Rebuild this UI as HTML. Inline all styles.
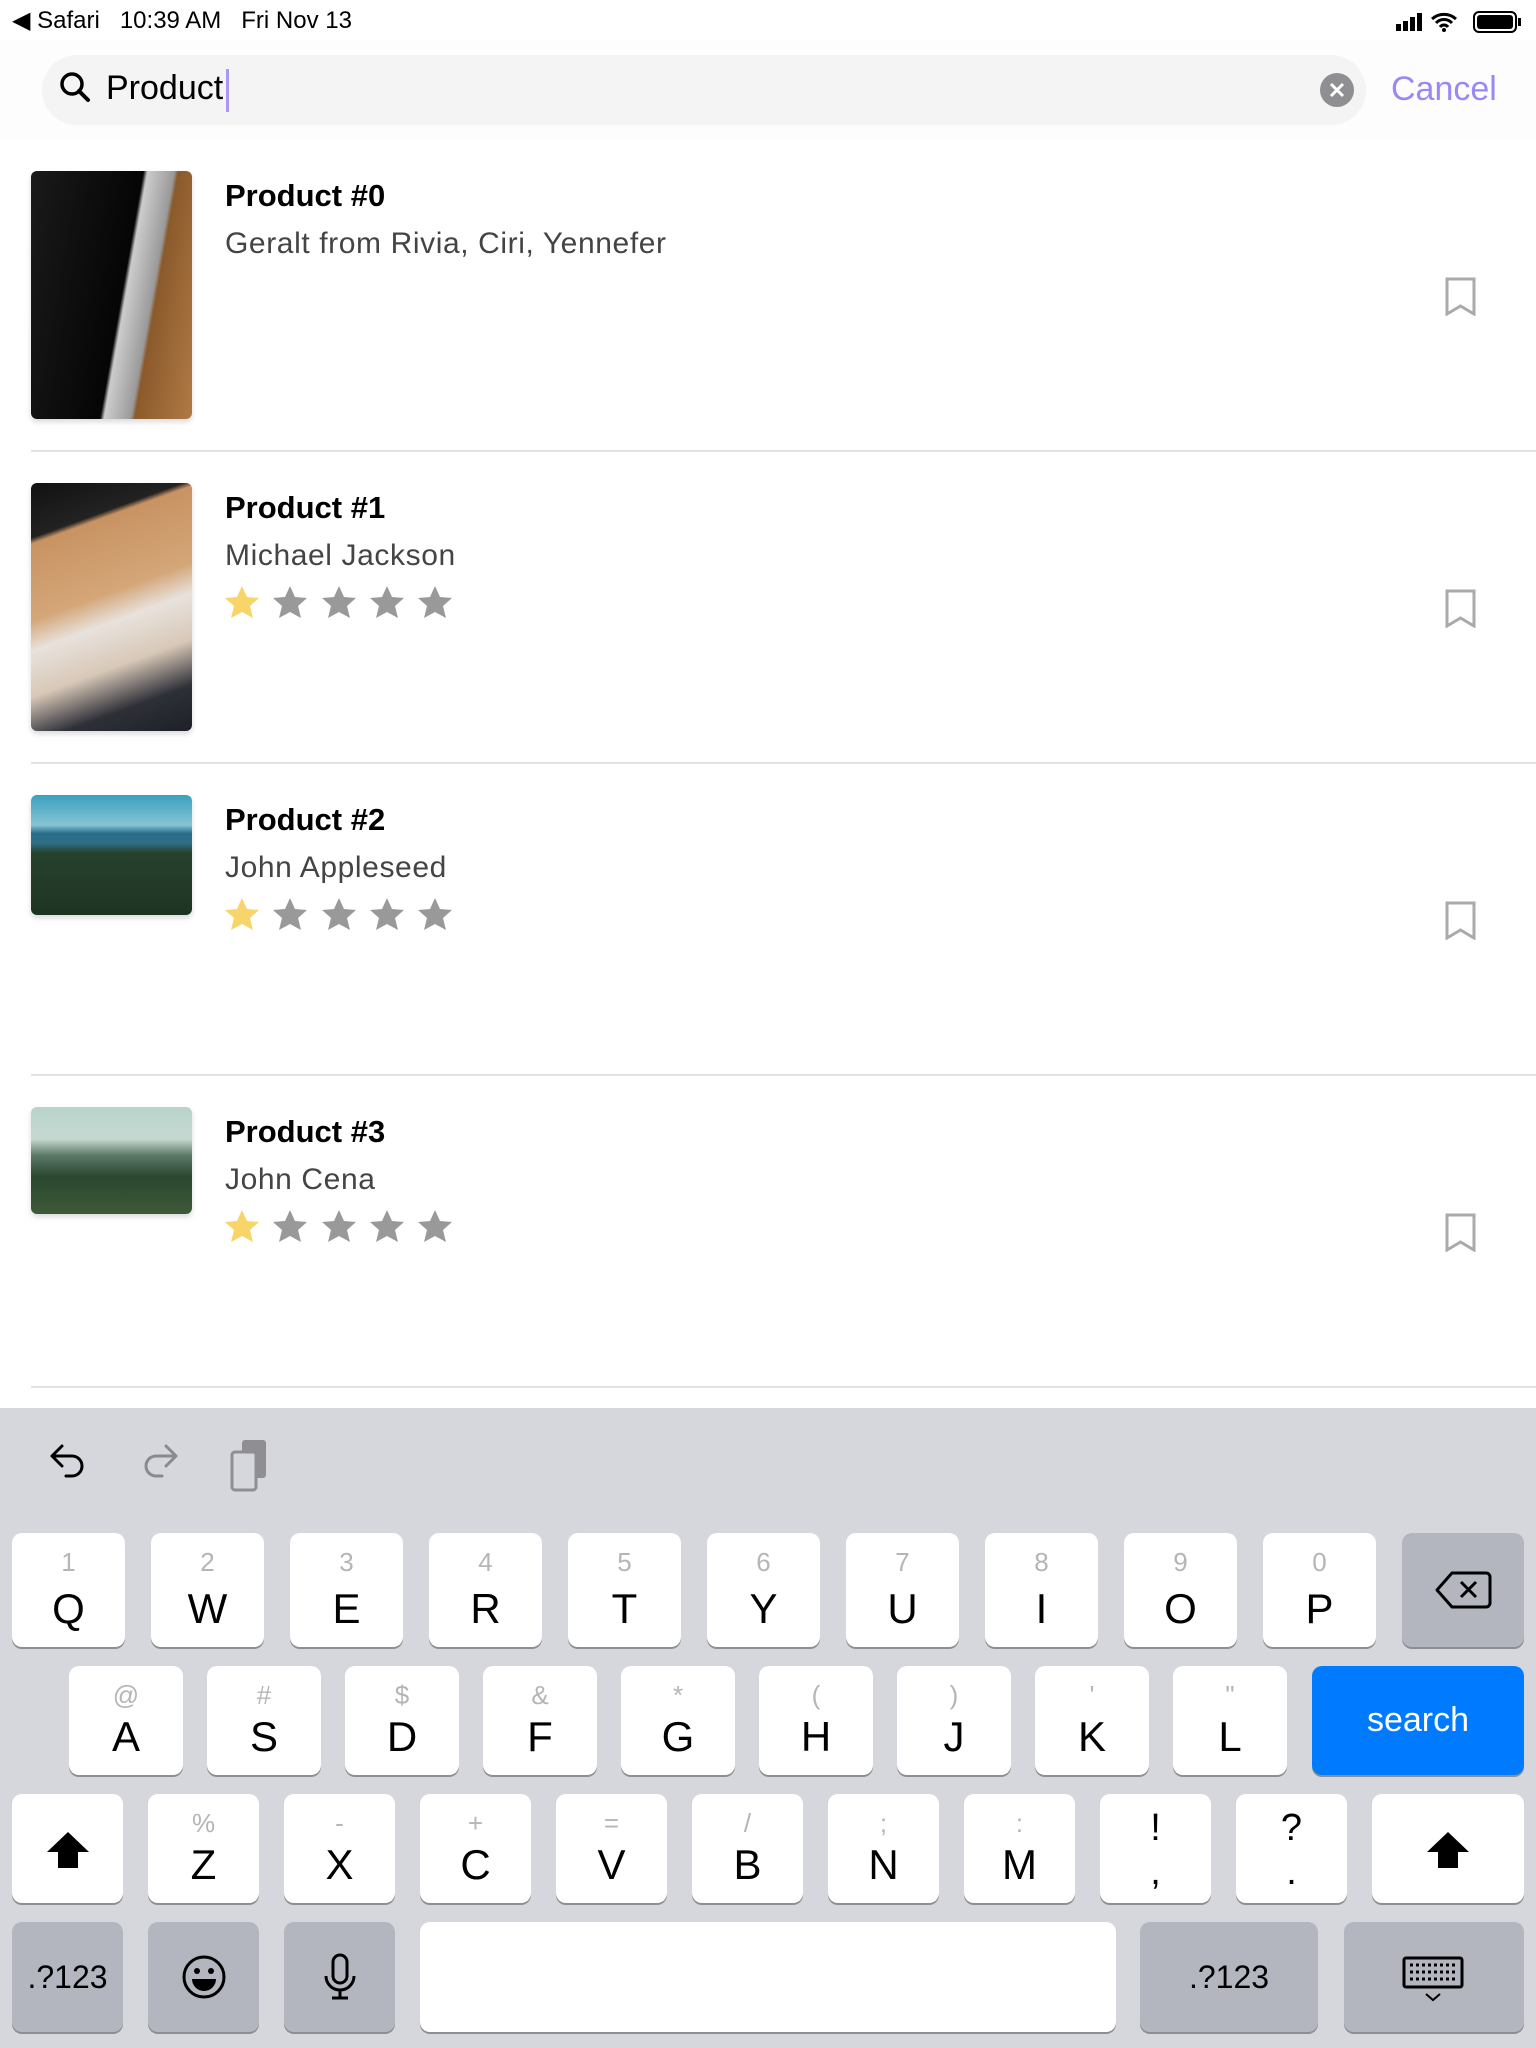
<!DOCTYPE html>
<html><head><meta charset="utf-8"><style>
*{margin:0;padding:0;box-sizing:border-box}
body{width:1536px;height:2048px;position:relative;background:#fff;font-family:"Liberation Sans",sans-serif;overflow:hidden}
.a{position:absolute}
.sb{font-size:24px;color:#000;top:6px}
.title{position:absolute;left:225px;font-size:31px;font-weight:bold;color:#000}
.sub{position:absolute;left:225px;font-size:30px;color:#444;letter-spacing:0.6px}
.div{position:absolute;left:31px;right:0;height:2px;background:#e2e2e2}
.img{position:absolute;left:31px;width:161px;border-radius:6px;box-shadow:0 3px 6px rgba(0,0,0,.15)}
.stars{position:absolute;left:224px}
.bm{position:absolute;left:1445px}
.kb{position:absolute;left:0;top:1408px;width:1536px;height:640px;background:#d5d7dc}
.k{position:absolute;background:#fff;border-radius:10px;box-shadow:0 2px 0 #8c8e93;text-align:center;color:#000}
.k .s{position:absolute;left:0;right:0;top:14px;font-size:26px;color:#b5b5b8}
.k .m{position:absolute;left:0;right:0;bottom:14px;font-size:42px}
.g{background:#b3b6bf}
.r1{top:1533px;height:114px;width:113px}
.r2{top:1666px;height:109px;width:114px}
.r3{top:1794px;height:109px;width:111px}
.r4{top:1922px;height:110px}
</style></head><body>
<div class="a sb" style="left:12px">◀ Safari&nbsp;&nbsp;&nbsp;10:39 AM&nbsp;&nbsp;&nbsp;Fri Nov 13</div>
<div class="a" style="left:1396px;top:10px">
<svg width="128" height="24"><rect x="0" y="14" width="5" height="7" fill="#000"/><rect x="7" y="11" width="5" height="10" fill="#000"/><rect x="14" y="7" width="5" height="14" fill="#000"/><rect x="21" y="3" width="5" height="18" fill="#000"/>
<path d="M36 9a18 18 0 0 1 24 0M40 13a11 11 0 0 1 16 0M44 17a5 5 0 0 1 8 0" stroke="#000" stroke-width="3" fill="none"/><circle cx="48" cy="20" r="2" fill="#000"/>
<rect x="78" y="2" width="42" height="20" rx="5" stroke="#000" stroke-width="2" fill="none"/><rect x="81" y="5" width="36" height="14" rx="3" fill="#000"/><rect x="122" y="8" width="3" height="8" fill="#000"/></svg></div>
<div class="a" style="left:0;top:40px;width:1536px;height:100px;background:#fdfdfd"></div>
<div class="a" style="left:42px;top:55px;width:1324px;height:70px;border-radius:35px;background:#f4f4f4"></div>
<svg class="a" style="left:58px;top:70px" width="36" height="36"><circle cx="14" cy="14" r="10" stroke="#000" stroke-width="3.5" fill="none"/><path d="M21 21l9 9" stroke="#000" stroke-width="4" stroke-linecap="round"/></svg>
<div class="a" style="left:106px;top:69px;font-size:34px;color:#000">Product</div>
<div class="a" style="top:69px;width:3px;height:43px;background:#a996f5;left:226px"></div>
<svg class="a" style="left:1320px;top:73px" width="34" height="34"><circle cx="17" cy="17" r="17" fill="#8e8e93"/><path d="M11 11l12 12M23 11l-12 12" stroke="#fff" stroke-width="3"/></svg>
<div class="a" style="left:1391px;top:70px;font-size:34px;color:#9b87f5">Cancel</div>

<svg width="0" height="0" style="position:absolute"><defs><path id="st" d="M18 1l5 11 12 1-9 8 3 12-11-6-11 6 3-12-9-8 12-1z"/></defs></svg>

<div class="img" style="top:171px;height:248px;background:linear-gradient(100deg,#1a1a1a 0%,#050505 55%,#ccc 57%,#9a9a9a 70%,#8b5a2b 72%,#b07a45 100%)"></div>
<div class="title" style="top:178px">Product #0</div>
<div class="sub" style="top:227px">Geralt from Rivia, Ciri, Yennefer</div>
<svg class="bm" style="top:277px" width="31" height="39"><path d="M2 2h27v35l-13.5-8L2 37z" fill="none" stroke="#aaa" stroke-width="3"/></svg>
<div class="div" style="top:450px"></div>

<div class="img" style="top:483px;height:248px;background:linear-gradient(160deg,#111 0%,#222 18%,#c89363 20%,#d4a678 45%,#e8e2dc 55%,#d8c8b8 70%,#2e3038 85%,#1e2028 100%)"></div>
<div class="title" style="top:490px">Product #1</div>
<div class="sub" style="top:539px">Michael Jackson</div>
<svg class="stars" style="top:585px" width="240" height="36"><use href="#st" fill="#f8d56b"/><use href="#st" x="48" fill="#999"/><use href="#st" x="97" fill="#999"/><use href="#st" x="145" fill="#999"/><use href="#st" x="193" fill="#999"/></svg>
<svg class="bm" style="top:589px" width="31" height="39"><path d="M2 2h27v35l-13.5-8L2 37z" fill="none" stroke="#aaa" stroke-width="3"/></svg>
<div class="div" style="top:762px"></div>

<div class="img" style="top:795px;height:120px;background:linear-gradient(180deg,#3aa0c0 0%,#86c4d4 25%,#2a6d8c 32%,#2e6f86 40%,#27412f 48%,#1e3322 100%)"></div>
<div class="title" style="top:802px">Product #2</div>
<div class="sub" style="top:851px">John Appleseed</div>
<svg class="stars" style="top:897px" width="240" height="36"><use href="#st" fill="#f8d56b"/><use href="#st" x="48" fill="#999"/><use href="#st" x="97" fill="#999"/><use href="#st" x="145" fill="#999"/><use href="#st" x="193" fill="#999"/></svg>
<svg class="bm" style="top:901px" width="31" height="39"><path d="M2 2h27v35l-13.5-8L2 37z" fill="none" stroke="#aaa" stroke-width="3"/></svg>
<div class="div" style="top:1074px"></div>

<div class="img" style="top:1107px;height:107px;background:linear-gradient(180deg,#b8d4cc 0%,#c6d8d0 30%,#5b7a68 45%,#2c4630 65%,#3d5a38 100%)"></div>
<div class="title" style="top:1114px">Product #3</div>
<div class="sub" style="top:1163px">John Cena</div>
<svg class="stars" style="top:1209px" width="240" height="36"><use href="#st" fill="#f8d56b"/><use href="#st" x="48" fill="#999"/><use href="#st" x="97" fill="#999"/><use href="#st" x="145" fill="#999"/><use href="#st" x="193" fill="#999"/></svg>
<svg class="bm" style="top:1213px" width="31" height="39"><path d="M2 2h27v35l-13.5-8L2 37z" fill="none" stroke="#aaa" stroke-width="3"/></svg>
<div class="div" style="top:1386px"></div>

<div class="kb"></div>
<svg class="a" style="left:48px;top:1442px" width="44" height="44">
<path d="M14 4L4 14l10 10M4 14h20a10 10 0 0 1 0 20h-6" fill="none" stroke="#000" stroke-width="3" stroke-linecap="round" stroke-linejoin="round"/></svg>
<svg class="a" style="left:136px;top:1442px" width="44" height="44">
<path d="M30 4l10 10-10 10M40 14H20a10 10 0 0 0 0 20h6" fill="none" stroke="#8a8a8e" stroke-width="3" stroke-linecap="round" stroke-linejoin="round"/></svg>
<svg class="a" style="left:228px;top:1438px" width="44" height="54"><rect x="14" y="2" width="24" height="38" rx="3" fill="#8e8e93"/><rect x="4" y="14" width="24" height="38" rx="3" fill="#d5d7dc" stroke="#8e8e93" stroke-width="3"/></svg>

<div class="k r1" style="left:12px"><div class="s">1</div><div class="m">Q</div></div>
<div class="k r1" style="left:151px"><div class="s">2</div><div class="m">W</div></div>
<div class="k r1" style="left:290px"><div class="s">3</div><div class="m">E</div></div>
<div class="k r1" style="left:429px"><div class="s">4</div><div class="m">R</div></div>
<div class="k r1" style="left:568px"><div class="s">5</div><div class="m">T</div></div>
<div class="k r1" style="left:707px"><div class="s">6</div><div class="m">Y</div></div>
<div class="k r1" style="left:846px"><div class="s">7</div><div class="m">U</div></div>
<div class="k r1" style="left:985px"><div class="s">8</div><div class="m">I</div></div>
<div class="k r1" style="left:1124px"><div class="s">9</div><div class="m">O</div></div>
<div class="k r1" style="left:1263px"><div class="s">0</div><div class="m">P</div></div>
<div class="k r1 g" style="left:1402px;width:122px"><svg style="margin-top:37px" width="58" height="40"><path d="M18 3h34a4 4 0 0 1 4 4v26a4 4 0 0 1-4 4H18L3 20z" fill="none" stroke="#000" stroke-width="3" stroke-linejoin="round"/><path d="M27 12l15 15M42 12l-15 15" stroke="#000" stroke-width="3"/></svg></div>

<div class="k r2" style="left:69px"><div class="s">@</div><div class="m">A</div></div>
<div class="k r2" style="left:207px"><div class="s">#</div><div class="m">S</div></div>
<div class="k r2" style="left:345px"><div class="s">$</div><div class="m">D</div></div>
<div class="k r2" style="left:483px"><div class="s">&amp;</div><div class="m">F</div></div>
<div class="k r2" style="left:621px"><div class="s">*</div><div class="m">G</div></div>
<div class="k r2" style="left:759px"><div class="s">(</div><div class="m">H</div></div>
<div class="k r2" style="left:897px"><div class="s">)</div><div class="m">J</div></div>
<div class="k r2" style="left:1035px"><div class="s">'</div><div class="m">K</div></div>
<div class="k r2" style="left:1173px"><div class="s">"</div><div class="m">L</div></div>
<div class="k r2" style="left:1312px;width:212px;background:#007aff;color:#fff;font-size:34px;line-height:109px">search</div>

<div class="k r3" style="left:12px"><svg style="margin-top:36px" width="46" height="40"><path d="M23 2L2 22h11v16h20V22h11z" fill="#000"/></svg></div>
<div class="k r3" style="left:148px"><div class="s">%</div><div class="m">Z</div></div>
<div class="k r3" style="left:284px"><div class="s">-</div><div class="m">X</div></div>
<div class="k r3" style="left:420px"><div class="s">+</div><div class="m">C</div></div>
<div class="k r3" style="left:556px"><div class="s">=</div><div class="m">V</div></div>
<div class="k r3" style="left:692px"><div class="s">/</div><div class="m">B</div></div>
<div class="k r3" style="left:828px"><div class="s">;</div><div class="m">N</div></div>
<div class="k r3" style="left:964px"><div class="s">:</div><div class="m">M</div></div>
<div class="k r3" style="left:1100px;font-size:38px;line-height:44px;padding-top:12px">!<br>,</div>
<div class="k r3" style="left:1236px;font-size:38px;line-height:44px;padding-top:12px">?<br>.</div>
<div class="k r3" style="left:1372px;width:152px"><svg style="margin-top:36px" width="46" height="40"><path d="M23 2L2 22h11v16h20V22h11z" fill="#000"/></svg></div>

<div class="k r4 g" style="left:12px;width:111px;font-size:32px;line-height:110px">.?123</div>
<div class="k r4 g" style="left:148px;width:111px"><svg style="margin-top:32px" width="46" height="46"><circle cx="23" cy="23" r="20" fill="none" stroke="#000" stroke-width="3"/><circle cx="16" cy="17" r="3" fill="#000"/><circle cx="30" cy="17" r="3" fill="#000"/><path d="M11 25h24a12 12 0 0 1-24 0z" fill="#000"/></svg></div>
<div class="k r4 g" style="left:284px;width:111px"><svg style="margin-top:30px" width="40" height="50"><rect x="13" y="3" width="14" height="28" rx="7" fill="none" stroke="#000" stroke-width="3"/><path d="M6 24a14 14 0 0 0 28 0M20 38v8M12 46h16" fill="none" stroke="#000" stroke-width="3"/></svg></div>
<div class="k r4" style="left:420px;width:696px"></div>
<div class="k r4 g" style="left:1140px;width:178px;font-size:32px;line-height:110px">.?123</div>
<div class="k r4 g" style="left:1344px;width:180px"><svg style="margin-top:34px" width="64" height="48"><rect x="2" y="2" width="58" height="29" rx="2" fill="none" stroke="#000" stroke-width="3"/><path d="M8 9h46M8 16h46M8 23h46" stroke="#000" stroke-width="3" stroke-dasharray="3 3"/><path d="M24 38l7 6 7-6" fill="none" stroke="#000" stroke-width="2"/></svg></div>
</body></html>
